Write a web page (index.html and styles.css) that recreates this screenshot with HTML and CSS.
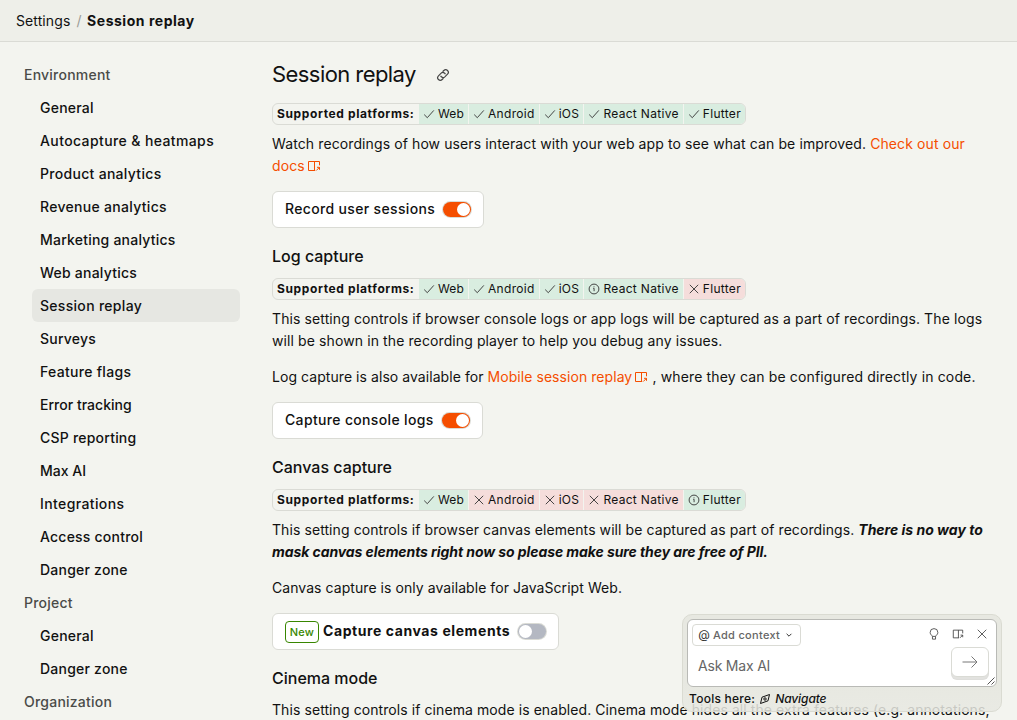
FILE: index.html
```html
<!DOCTYPE html>
<html lang="en">
<head>
<meta charset="utf-8">
<title>Session replay</title>
<link rel="stylesheet" href="styles.css">
</head>
<body>
<svg class="defs" aria-hidden="true">
  <symbol id="check" viewBox="0 0 12 12"><path d="M1.2 6.6 4.3 9.7 10.8 2.4"/></symbol>
  <symbol id="cross" viewBox="0 0 12 12"><path d="M1.8 1.8 10.2 10.2M10.2 1.8 1.8 10.2"/></symbol>
  <symbol id="info" viewBox="0 0 12 12"><circle cx="6" cy="6" r="4.9"/><path d="M5.2 5.3H6.1V8.2M6 3.4V4.2"/></symbol>
  <symbol id="panel" viewBox="0 0 14 14"><path d="M12.5 6.3V2.5H1.5V11.5H8.2M7.5 2.5V11.5M9.3 11.5 12.3 8.5M10 8.3H12.5V10.8"/></symbol>
</svg>
<header class="topbar"><span>Settings</span><span class="slash">/</span><strong>Session replay</strong></header>
<div class="layout">
  <nav class="sidebar">
    <div class="group">Environment</div>
    <a class="item">General</a>
    <a class="item wider">Autocapture &amp; heatmaps</a>
    <a class="item wide">Product analytics</a>
    <a class="item wide">Revenue analytics</a>
    <a class="item">Marketing analytics</a>
    <a class="item">Web analytics</a>
    <a class="item wide active">Session replay</a>
    <a class="item">Surveys</a>
    <a class="item wide">Feature flags</a>
    <a class="item tight">Error tracking</a>
    <a class="item">CSP reporting</a>
    <a class="item tight">Max AI</a>
    <a class="item wider">Integrations</a>
    <a class="item">Access control</a>
    <a class="item">Danger zone</a>
    <div class="group">Project</div>
    <a class="item">General</a>
    <a class="item">Danger zone</a>
    <div class="group">Organization</div>
  </nav>
  <main class="content">
    <h1>Session replay <svg class="link-icon" viewBox="0 0 14 14"><g transform="rotate(-45 7 7)"><path d="M5 9.6H3.2A2.6 2.6 0 0 1 3.2 4.4H7A2.6 2.6 0 0 1 9.2 8.2M9 4.4H10.8A2.6 2.6 0 0 1 10.8 9.6H7A2.6 2.6 0 0 1 4.8 5.8"/></g></svg></h1>
    <div class="platforms"><b>Supported platforms:</b><span class="yes"><svg><use href="#check"/></svg>Web</span><span class="yes"><svg><use href="#check"/></svg>Android</span><span class="yes"><svg><use href="#check"/></svg>iOS</span><span class="yes"><svg><use href="#check"/></svg>React Native</span><span class="yes"><svg><use href="#check"/></svg>Flutter</span></div>
    <p>Watch recordings of how users interact with your web app to see what can be improved. <a>Check out our docs<svg class="ext"><use href="#panel"/></svg></a></p>
    <label class="switch-box"><span class="label">Record user sessions</span><span class="switch on"></span></label>

    <h2>Log capture</h2>
    <div class="platforms"><b>Supported platforms:</b><span class="yes"><svg><use href="#check"/></svg>Web</span><span class="yes"><svg><use href="#check"/></svg>Android</span><span class="yes"><svg><use href="#check"/></svg>iOS</span><span class="yes"><svg><use href="#info"/></svg>React Native</span><span class="no"><svg><use href="#cross"/></svg>Flutter</span></div>
    <p>This setting controls if browser console logs or app logs will be captured as a part of recordings. The logs will be shown in the recording player to help you debug any issues.</p>
    <p class="mobile"><span class="snug">Log capture is also available for <a>Mobile session replay<svg class="ext"><use href="#panel"/></svg></a></span> , where they can be configured directly in code.</p>
    <label class="switch-box"><span class="label">Capture console logs</span><span class="switch on"></span></label>

    <h2>Canvas capture</h2>
    <div class="platforms"><b>Supported platforms:</b><span class="yes"><svg><use href="#check"/></svg>Web</span><span class="no"><svg><use href="#cross"/></svg>Android</span><span class="no"><svg><use href="#cross"/></svg>iOS</span><span class="no"><svg><use href="#cross"/></svg>React Native</span><span class="yes"><svg><use href="#info"/></svg>Flutter</span></div>
    <p class="canvas-note">This setting controls if browser canvas elements will be captured as part of recordings. <b><i>There is no way to <span class="condensed">mask canvas elements right now so please make sure they are free of PII.</span></i></b></p>
    <p class="snug">Canvas capture is only available for JavaScript Web.</p>
    <label class="switch-box"><span class="tag">New</span><b class="label">Capture canvas elements</b><span class="switch"></span></label>

    <h2 class="cinema">Cinema mode</h2>
    <p class="last">This setting controls if cinema mode is enabled. Cinema mode hides all the extra features (e.g. annotations,</p>
  </main>
</div>
<aside class="assistant">
  <div class="prompt">
    <div class="prompt-top">
      <button class="context"><span class="at">@</span>Add context<svg viewBox="0 0 8 8"><path d="M1.6 2.8 4 5.2 6.4 2.8"/></svg></button>
      <div class="tools">
        <svg viewBox="0 0 14 14"><path d="M5 9.8C5 8.6 2.5 7.8 2.5 5.2a4.5 4.5 0 0 1 9 0C11.5 7.8 9 8.6 9 9.8ZM5.2 10V13H8.8V10"/></svg>
        <svg viewBox="0 0 14 14"><use href="#panel"/></svg>
        <svg viewBox="0 0 14 14"><path d="M2 2 12 12M12 2 2 12"/></svg>
      </div>
    </div>
    <div class="prompt-body">
      <span>Ask Max AI</span>
      <button class="send"><svg viewBox="0 0 18 18"><path d="M1.5 9H16M10.5 3.5 16 9 10.5 14.5"/></svg></button>
    </div>
    <svg class="grip" viewBox="0 0 8 8"><path d="M0.5 7.5 7.5 0.5M4.5 7.5 7.5 4.5"/></svg>
  </div>
  <div class="tools-here"><span>Tools here:</span><svg viewBox="0 0 12 12"><path d="M1.5 10.5 3 4.2 10.5 1.5 9 7.8ZM4.8 6A1.2 1.2 0 1 0 7.2 6A1.2 1.2 0 1 0 4.8 6"/></svg><i>Navigate</i></div>
</aside>
</body>
</html>
```
FILE: styles.css
```css
* { box-sizing: border-box; }
html, body { height: 100%; }
body {
  margin: 0;
  overflow: hidden;
  background: #f3f4ef;
  color: #111;
  font-family: Inter, "Liberation Sans", sans-serif;
  font-size: 14px;
  line-height: 22px;
}
svg { fill: none; stroke: currentColor; flex: none; }
.defs { position: absolute; width: 0; height: 0; }
.topbar {
  height: 42px;
  padding-left: 16px;
  display: flex;
  align-items: center;
  background: #eeefe9;
  border-bottom: 1px solid #dadbd5;
  letter-spacing: 0.1px;
}
.topbar strong { letter-spacing: 0.53px; }
.slash { margin: 0 5.5px 0 6px; color: #9b9c97; }
.layout { display: flex; height: 678px; }
.sidebar { width: 240px; padding: 16px 0 0 16px; flex: none; font-weight: 500; letter-spacing: 0.22px; }
.group, .item { height: 33px; line-height: 33px; padding-left: 8px; display: block; }
.group { color: #4a4b48; }
.item { margin-left: 16px; border-radius: 6px; }
.wide { letter-spacing: 0.3px; }
.wider { letter-spacing: 0.39px; }
.tight { letter-spacing: 0.02px; }
.active { background: #e6e7e2; }
.content { width: 744px; padding: 16px 0 0 32px; flex: none; }
h1, h2, p { margin: 0; }
h1 {
  height: 33px;
  padding-bottom: 1px;
  display: flex;
  align-items: center;
  gap: 20px;
  font-size: 22px;
  font-weight: 400;
  letter-spacing: -0.57px;
  margin-bottom: 12px;
}
.link-icon { width: 14px; height: 14px; margin-top: 1px; color: #444; stroke-width: 1.2px; }
h2 { font-size: 16px; line-height: 24px; font-weight: 500; margin: 16px 0 10px; }
.cinema { margin-bottom: 9px; }
.platforms {
  display: flex;
  width: max-content;
  height: 22px;
  border: 1px solid #dadbd5;
  border-radius: 6px;
  overflow: hidden;
  font-size: 12px;
  line-height: 20px;
  margin-bottom: 8px;
}
.platforms b { width: 146px; padding-left: 4px; letter-spacing: 0.62px; white-space: nowrap; }
.platforms span { display: flex; align-items: center; gap: 3px; padding: 0 4px; letter-spacing: 0.31px; }
.platforms span + span { border-left: 1px solid #f3f4ef; }
.platforms b + span { width: 49px; letter-spacing: 0.1px; }
.platforms svg { width: 12px; height: 12px; stroke-width: 0.9px; color: #333; }
.yes { background: #d9ede0; }
.no { background: #f5dddb; }
p { margin-bottom: 14px; letter-spacing: 0.105px; }
.snug { letter-spacing: 0.06px; }
.mobile { letter-spacing: 0.15px; }
.canvas-note { letter-spacing: 0.08px; }
.canvas-note b { letter-spacing: 0; }
.condensed { letter-spacing: -0.08px; }
a { color: #f54e00; }
.item { color: #111; }
.ext { width: 14px; height: 14px; margin-left: 2px; vertical-align: -2px; }
.switch-box {
  display: flex;
  align-items: center;
  width: max-content;
  height: 37px;
  padding: 0 12px;
  border: 1px solid #dadbd5;
  border-radius: 6px;
  background: #fff;
  font-weight: 500;
}
.label { padding-bottom: 2px; letter-spacing: 0.34px; }
b.label { font-weight: 700; letter-spacing: 0.58px; }
.switch {
  width: 28px;
  height: 15px;
  margin-left: 8px;
  padding: 0 1px;
  border-radius: 8px;
  display: flex;
  align-items: center;
  background: #b4b8c2;
  box-shadow: 0 0 0 1px #dadbd5;
}
.switch::after { content: ""; width: 13px; height: 13px; border-radius: 50%; background: #fff; }
.on { background: #f54e00; justify-content: flex-end; }
.tag {
  width: 34px;
  height: 22px;
  line-height: 20px;
  text-align: center;
  margin-right: 4px;
  border: 1px solid #388600;
  border-radius: 4px;
  color: #388600;
  font-size: 11px;
  font-weight: 500;
  letter-spacing: 0.2px;
}
.last { white-space: nowrap; letter-spacing: 0.08px; }
.assistant {
  position: absolute;
  left: 682px;
  top: 614px;
  width: 320px;
  height: 98px;
  padding: 4px;
  border: 1px solid #dadbd2;
  border-radius: 10px;
  background: linear-gradient(#e7e8e1 70%, rgba(231, 232, 225, 0.85) 95%);
}
.prompt {
  position: relative;
  height: 68px;
  background: #fff;
  border: 1px solid #b9bab6;
  border-radius: 6px;
}
.prompt-top { display: flex; justify-content: space-between; padding: 4px 8px 0 4px; }
button { font: inherit; background: #fff; border: 1px solid #dadbd5; padding: 0; display: flex; align-items: center; }
.context {
  width: 109px;
  height: 22px;
  padding: 0 0 0 5px;
  border-radius: 4px;
  font-size: 11px;
  font-weight: 500;
  letter-spacing: 0.3px;
  color: #666;
}
.context svg { width: 8px; height: 8px; margin-left: 5px; color: #333; }
.at { width: 12px; font-size: 12px; font-weight: 400; letter-spacing: 0; margin-right: 3px; color: #333; }
.tools { display: flex; gap: 12px; color: #444; padding-top: 4px; }
.tools svg { width: 12px; height: 12px; }
.prompt-body { display: flex; justify-content: space-between; padding: 1px 7px 0 10px; color: #666; }
.prompt-body span { line-height: 38px; letter-spacing: -0.2px; }
.send {
  width: 38px;
  height: 30px;
  justify-content: center;
  border-radius: 6px;
  box-shadow: 0 3px 0 -1px #e2e2df, 0 3px 0 #dededb;
  color: #777;
}
.send svg { width: 18px; height: 18px; }
.grip { position: absolute; right: 1px; bottom: 1px; width: 8px; height: 8px; color: #555; }
.tools-here { display: flex; align-items: center; height: 24px; padding-left: 2px; font-size: 12px; font-weight: 500; letter-spacing: 0.25px; }
.tools-here svg { width: 12px; height: 12px; margin: 0 4px 0 4px; }
.tools-here i { letter-spacing: -0.1px; }
```
